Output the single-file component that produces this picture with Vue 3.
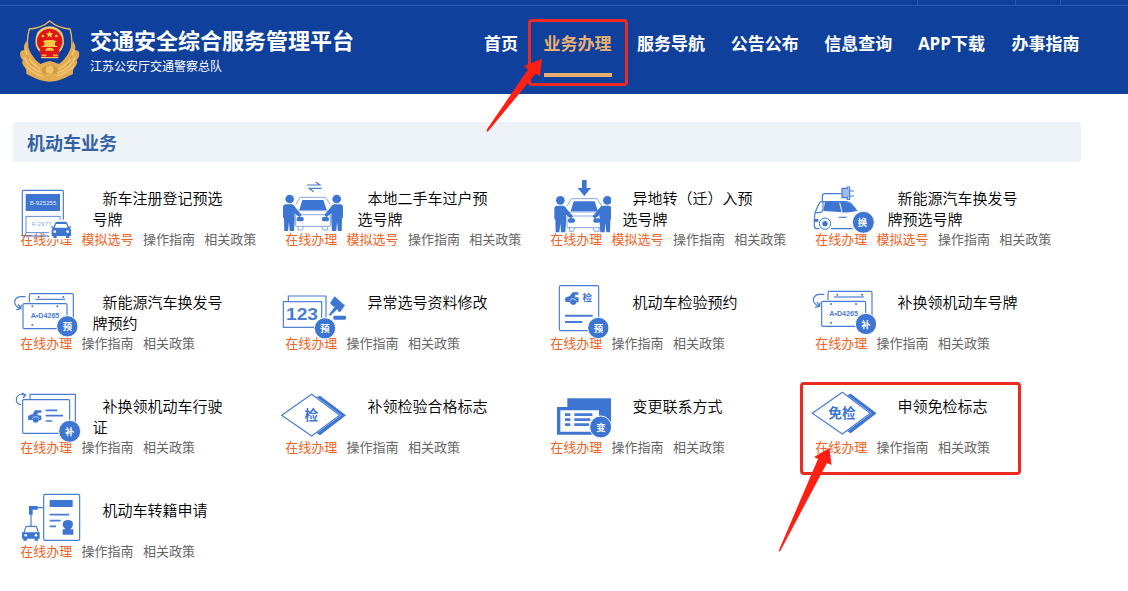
<script setup>
const nav = ['首页', '业务办理', '服务导航', '公告公布', '信息查询', 'APP下载', '办事指南']
const apply = ['在线办理']
const pick = ['在线办理', '模拟选号']
const info = ['操作指南', '相关政策']
const services = [
  { icon: 'register', box: '39 24 204 186', title: ['新车注册登记预选', '号牌'], hot: pick },
  { icon: 'transfer', box: '24 24 204 186', title: ['本地二手车过户预', '选号牌'], hot: pick },
  { icon: 'movein', box: '9 24 204 186', title: ['异地转（迁）入预', '选号牌'], hot: pick },
  { icon: 'energy', box: '24 24 204 186', title: ['新能源汽车换发号', '牌预选号牌'], hot: pick },
  { icon: 'plate', badge: '预', box: '39 336 204 186', title: ['新能源汽车换发号', '牌预约'], hot: apply },
  { icon: 'modify', box: '24 336 204 186', title: ['异常选号资料修改'], hot: apply },
  { icon: 'inspect', box: '9 336 204 186', title: ['机动车检验预约'], hot: apply },
  { icon: 'plate', badge: '补', box: '28 343 204 186', title: ['补换领机动车号牌'], hot: apply },
  { icon: 'license', box: '39 18 204 186', title: ['补换领机动车行驶', '证'], hot: apply },
  { icon: 'diamond', label: '检', box: '24 18 204 186', title: ['补领检验合格标志'], hot: apply },
  { icon: 'contact', box: '9 18 204 186', title: ['变更联系方式'], hot: apply },
  { icon: 'diamond', label: '免检', box: '22 24 204 186', title: ['申领免检标志'], hot: apply },
  { icon: 'migrate', box: '39 330 204 186', title: ['机动车转籍申请'], hot: apply },
]
</script>

<template>
  <div class="page">
    <header class="header">
      <div class="topline"><i class="t1"></i><i class="t2"></i><i class="t3"></i></div>
      <div class="bar">
        <svg class="emblem" viewBox="0 0 210 225">
          <path d="M104 18Q130 40 165 42Q176 80 166 118Q152 164 104 176Q56 164 42 118Q32 80 43 42Q80 40 104 18Z" fill="#0f3f9a" stroke="#e8b65f" stroke-width="4" />
          <path d="M34 78Q44 124 76 147L90 142L104 138L118 142L132 147Q164 124 174 78Q184 92 180 106Q191 104 193 116Q192 130 184 135Q190 142 182 153Q172 162 174 177Q150 189 132 196Q104 204 76 196Q58 189 34 177Q36 162 26 153Q18 142 24 135Q16 130 15 116Q17 104 28 106Q24 92 34 78Z" fill="#e3ac53" />
          <path d="M31 104Q42 144 76 162M28 128Q42 158 82 174M32 152Q50 174 84 184M178 104Q168 144 132 162M181 128Q168 158 126 174M178 152Q158 174 124 184" fill="none" stroke="#f3cd7c" stroke-width="4" />
          <path d="M42 132L36 120M54 154L45 146M166 132L172 120M154 154L163 146" stroke="#c98f3b" stroke-width="3" />
          <path d="M80 160Q104 142 128 160L126 176H82Z" fill="#d09a42" /><circle cx="104" cy="164" r="12" fill="#efc46c" />
          <path d="M62 90Q56 38 104 34Q152 38 146 90Q140 108 130 114V130H78V114Q68 108 62 90Z" fill="#f0c974" />
          <circle cx="104" cy="79" r="38" fill="#df1518" />
          <path d="M73 106H134L130 126H78Z" fill="#db1919" />
          <path d="M104 47L107 55H115L109 60L111 68L104 63L97 68L99 60L93 55H101Z" fill="#ffd93b" />
          <circle cx="84" cy="63" r="4" fill="#ffd93b" /><circle cx="124" cy="63" r="4" fill="#ffd93b" />
          <path d="M88 91V82L82 80L92 75H116L126 80L120 82V91L130 96H78ZM91 107A13 9 0 0 1 117 107Z" fill="#f9c943" />
          <path d="M80 121H94M114 121H128" stroke="#f3b644" stroke-width="5" />
        </svg>
        <div class="brand">
          <h1>交通安全综合服务管理平台</h1>
          <p>江苏公安厅交通警察总队</p>
        </div>
        <nav class="nav">
          <a v-for="(n, i) in nav" :key="n" :class="{ active: i === 1, short: i === 0 }">{{ n }}</a>
        </nav>
      </div>
    </header>

    <main class="main">
      <h2 class="section">机动车业务</h2>
      <div class="grid">
        <article v-for="(s, i) in services" :key="i" class="card">
          <div class="top">
            <svg class="icon" :viewBox="s.box">
              <g v-if="s.icon === 'register'">
                <rect x="67" y="61" width="123" height="137" rx="4" class="line" />
                <rect x="77" y="72" width="103" height="51" class="fill" />
                <rect x="78" y="139" width="102" height="49" class="line thin" />
                <text x="89" y="104" class="plate light" textLength="80">B-925255</text>
                <text x="96" y="167" class="plate pale" textLength="58">F-2977</text>
                <path d="M147 176L158 149H208L219 176V208H147Z" fill="#fff" />
                <path d="M155 179L158 174L153 171L155 168L160 171L166 158Q167 155 171 155H196Q200 155 201 158L207 171L212 168L214 171L209 174L213 179V198H208V204H198V198H170V204H160V198H155Z" class="fill" />
                <path d="M168 162H199L203 173H164Z" fill="#fff" />
                <circle cx="164" cy="185" r="4" fill="#fff" /><circle cx="203" cy="185" r="4" fill="#fff" />
              </g>

              <g v-else-if="s.icon === 'transfer' || s.icon === 'movein'">
                <g v-if="s.icon === 'transfer'">
                  <path d="M111 45H150L137 36M155 55H117L131 65" class="line" />
                </g>
                <path v-else d="M126 30H140V54H153L133 78L113 54H126Z" class="fill" />
                <g :transform="s.icon === 'movein' ? 'translate(4 4)' : ''">
                  <path d="M77 104L90 82H167L181 104M77 130L88 122H170L181 130M84 168V180H96L102 168M154 168L160 180H173V168" class="line soft" />
                  <path d="M77 134H181V169H77Z" class="line soft" />
                  <path d="M97 90H160L170 120H88Z" class="fill" />
                  <rect x="80" y="141" width="21" height="13" rx="5" class="fill" />
                  <rect x="156" y="141" width="21" height="13" rx="5" class="fill" />
                  <circle :cx="s.icon === 'movein' ? 57 : 59" cy="87" r="13" class="fill" />
                  <path d="M39 112Q39 103 48 103H66Q72 104 76 112L95 135L89 142L74 130V154L72 183H59L57 156L54 183H43L42 145L39 143Z" class="fill" />
                  <circle :cx="s.icon === 'movein' ? 198 : 200" cy="87" r="13" class="fill" />
                  <path :transform="s.icon === 'movein' ? 'translate(-9 0)' : ''" d="M219 112Q219 103 210 103H192Q186 104 182 112L163 135L169 142L184 130V154L186 183H199L201 156L204 183H215L216 145L219 143Z" class="fill" />
                </g>
              </g>

              <g v-else-if="s.icon === 'energy'">
                <path d="M67 94V79Q67 71 76 71H125M150 63H162M150 78H162" class="line" />
                <path d="M126 55H147V83H126Z" fill="#9dbbe9" /><path d="M126 55H142V51H149V88H142V83H126Z" class="line" />
                <path d="M58 176H49Q43 175 43 164V151L45 128L56 103Q59 95 66 95H137Q149 95 158 106L171 123M93 176H158M44 128H58Q67 128 69 119V96M124 96L130 127" class="line" />
                <path d="M75 96H135Q149 97 155 105L171 122Q150 129 128 127L70 123ZM43 147H55V155H43Z" class="fill" />
                <path d="M119 98L126 127" stroke="#fff" stroke-width="3" /><path d="M116 142H140" class="line" />
                <circle cx="75" cy="161" r="17" fill="#fff" stroke="#3d75d3" stroke-width="3" /><circle cx="75" cy="161" r="8" class="fill" />
                <circle cx="190" cy="157" r="33" class="badge" /><text x="187" y="168" class="btext">换</text>
              </g>

              <g v-else-if="s.icon === 'plate'">
                <path d="M77 380H61Q46 382 44 395Q43 407 59 415M55 403L63 416L49 419M65 404L61 416" class="line" />
                <path d="M88 397V376Q88 371 93 371H216Q220 371 220 376V461H202" class="line" />
                <path d="M106 388H196" class="line" />
                <rect x="69" y="401" width="132" height="75" rx="4" class="line" />
                <g class="fill"><circle cx="116" cy="381" r="3" /><circle cx="190" cy="381" r="3" /><circle cx="97" cy="409" r="3" /><circle cx="172" cy="409" r="3" /><circle cx="97" cy="465" r="3" /></g>
                <text x="92" y="444" class="plate mid" textLength="86" lengthAdjust="spacingAndGlyphs">A•D4265</text>
                <circle cx="202" cy="469" r="32" class="badge" /><text x="202" y="480" class="btext">{{ s.badge }}</text>
              </g>

              <g v-else-if="s.icon === 'modify'">
                <path d="M55 393V378H168V445" class="line" />
                <rect x="40" y="395" width="115" height="77" class="line" />
                <text x="48" y="450" class="number" textLength="96" lengthAdjust="spacingAndGlyphs">123</text>
                <path d="M194 379L199 383L220 403L225 406L211 425L207 426L202 420L203 416L180 438L177 434L195 409L190 410L180 399L184 394Z" class="fill" />
                <rect x="190" y="437" width="38" height="12" rx="4" class="fill" />
                <circle cx="165" cy="475" r="32" class="badge" /><text x="165" y="486" class="btext">预</text>
              </g>

              <g v-else-if="s.icon === 'inspect'">
                <rect x="58" y="347" width="118" height="135" rx="5" class="line" />
                <path d="M75 384L82 380L89 379L98 367H115V374H106L104 380L116 383V395L110 396Q108 405 99 405Q91 404 90 397L76 395Z" class="fill" />
                <path d="M89 393Q92 386 99 386Q107 386 109 393" fill="none" stroke="#fff" stroke-width="2" />
                <text x="142" y="394" class="check">检</text>
                <path d="M75 437H158M75 456H127" class="line thick" />
                <circle cx="175" cy="474" r="32" class="badge" /><text x="175" y="485" class="btext">预</text>
              </g>

              <g v-else-if="s.icon === 'license'">
                <path d="M63 74Q49 70 49 59Q50 44 65 42L75 46M66 39L77 45L69 54" class="line" />
                <path d="M90 57V43H226V145H209" class="line" /><rect x="68" y="59" width="141" height="101" rx="3" class="line" />
                <path d="M84 108L92 104L98 103L105 91H124V98H114L112 105L124 107V120L117 121Q114 129 106 128Q98 127 98 120H85Z" class="fill" />
                <path d="M96 117Q99 110 107 110Q115 110 117 117" fill="none" stroke="#fff" stroke-width="2" />
                <path d="M137 91H172M137 107H189M137 123H157" class="line thick2" />
                <circle cx="209" cy="154" r="33" class="badge" /><text x="209" y="165" class="btext">补</text>
              </g>

              <g v-else-if="s.icon === 'diamond'">
                <path d="M35 106L125 43L209 106L125 168Z" class="line" />
                <path d="M140 51L150 47L228 106L150 166L140 160L213 106Z" class="fill" />
                <text x="124" y="120" class="dtext">{{ s.label }}</text>
              </g>

              <g v-else-if="s.icon === 'contact'">
                <path d="M82 55H213V154H82Z" class="fill" />
                <path d="M51 81H181V164H51Z" class="fill" /><path d="M61 91H177V155H61Z" fill="#fff" />
                <path d="M75 104H91M75 119H91M75 134H91M103 104H157M103 119H151M103 134H147" class="line contact-line" />
                <circle cx="182" cy="141" r="33" class="badge" /><text x="183" y="152" class="btext">变</text>
              </g>

              <g v-else>
                <rect x="131" y="343" width="108" height="138" rx="4" class="line" />
                <path d="M149 360H218V381H149Z" class="fill" />
                <path d="M149 404H207M149 422H182M149 439H168" class="line thick2" />
                <path d="M131 383H110M93 399V438" class="line" /><path d="M87 378H113V389H98V404H87Z" class="fill" />
                <path d="M197 448Q187 440 188 431Q190 420 204 420Q218 420 219 432Q219 442 211 448H220V464H188V448Z" class="fill" />
                <path d="M72 458L77 442Q78 439 81 439H106Q109 439 110 442L115 458" class="line" />
                <path d="M66 457L119 457V476H114V482H104V476H81V482H70V476H66Z" class="fill" />
                <circle cx="77" cy="466" r="4" fill="#fff" /><circle cx="108" cy="466" r="4" fill="#fff" />
              </g>
            </svg>
            <h3><span v-for="(t, k) in s.title" :key="t" :class="{ first: k === 0 }">{{ t }}</span></h3>
          </div>
          <div class="links">
            <a v-for="l in s.hot" :key="l" class="hot">{{ l }}</a>
            <a v-for="l in info" :key="l">{{ l }}</a>
          </div>
        </article>
      </div>
    </main>

    <svg class="marks" viewBox="0 0 1128 591">
      <rect x="529.5" y="20.5" width="97" height="64" rx="2.5" />
      <rect x="801.5" y="383.5" width="218" height="90" rx="2.5" />
      <path d="M542 59L540 76L535.5 74L488 131.5Q486.500 132 486.500 130L528 69.500L524 66Z" />
      <path d="M829.500 448L831.500 465L827 463L780 551.500Q778.500 552 779 550L818 459L814 457Z" />
    </svg>
  </div>
</template>

<style>
html, body { margin: 0; background: #fff; overflow: hidden; }
</style>

<style scoped>
.page { position: relative; height: 591px; overflow: hidden; background: #fff; font-family: "Noto Sans CJK SC", sans-serif; }
h1, h2, h3, p { margin: 0; }
.header { height: 94px; background: #0f409b; box-sizing: border-box; }
.topline { height: 6px; box-sizing: border-box; border-bottom: 1px solid #2a5bb2; display: flex; justify-content: flex-end; }
.topline i { height: 5px; box-sizing: border-box; border-left: 1px solid #2a5bb2; }
.t1 { width: 98px; }
.t2 { width: 45px; }
.t3 { width: 68px; }
.bar { display: flex; height: 88px; padding-left: 15px; }
.emblem { width: 70px; height: 75px; margin-top: 9px; flex: none; }
.brand { width: 399px; padding-left: 5px; box-sizing: border-box; color: #fff; flex: none; white-space: nowrap; }
.brand h1 { font-size: 22px; line-height: 32px; margin-top: 17px; font-weight: 700; }
.brand p { font-size: 12px; line-height: 18px; margin-top: 2px; }
.nav { display: flex; gap: 25.500px; }
.nav a { width: 68.100px; height: 71px; flex: none; box-sizing: border-box; padding-top: 26px; font: 700 17px/24px "Open Sans", "Noto Sans CJK SC", sans-serif; color: #fff; white-space: nowrap; }
.nav a.short { width: 34px; }
.nav a.active { color: #e9af72; border-bottom: 4px solid #e9b06e; }
.main { padding: 28px 0 0 13px; }
.section { width: 1068px; height: 40px; box-sizing: border-box; padding-left: 14px; border-radius: 4px; background: #edf3f8; font-size: 18px; line-height: 41px; color: #3562a2; }
.grid { display: grid; grid-template-columns: repeat(4, 265px); grid-auto-rows: 104px; padding-top: 16px; }
.top { display: flex; height: 51px; }
.icon { position: relative; z-index: 1; width: 68px; height: 62px; flex: none; }
h3 { padding: 9px 0 0 11.500px; font-size: 15px; line-height: 21px; font-weight: 350; color: #000; white-space: nowrap; }
h3 span { display: block; }
h3 .first { padding-left: 10px; }
.links { display: flex; gap: 9.300px; padding-left: 7.300px; font-size: 13px; line-height: 20px; color: #666; }
.links a { white-space: nowrap; }
.links .hot { color: #ed6324; }
.line { fill: none; stroke: #477bd4; stroke-width: 3.500; }
.thin { stroke-width: 2.500; }
.soft { stroke: #86a8e2; stroke-width: 3; }
.thick { stroke-width: 6; }
.thick2 { stroke-width: 5; }
.contact-line { stroke-width: 8; }
.fill { fill: #3d75d3; }
.badge { fill: #3d75d3; stroke: #fff; stroke-width: 3; }
.btext { font-size: 28px; font-weight: 700; fill: #fff; text-anchor: middle; }
.plate { font-family: "Liberation Sans", sans-serif; font-size: 18px; }
.light { fill: #e6eefb; }
.pale { fill: #7da0dd; font-size: 16px; }
.mid { fill: #4a7cd4; font-weight: 700; font-size: 19px; }
.number { font: 700 49px "Liberation Sans", sans-serif; fill: #4a7cd2; }
.check { font-size: 29px; font-weight: 700; fill: #3d75d3; text-anchor: middle; }
.dtext { font-size: 41px; font-weight: 700; fill: #3d75d3; text-anchor: middle; }
.marks { position: absolute; inset: 0; width: 1128px; height: 591px; z-index: 3; pointer-events: none; }
.marks rect { fill: none; stroke: #ec2a22; stroke-width: 3; }
.marks path { fill: #ff2013; }
</style>
